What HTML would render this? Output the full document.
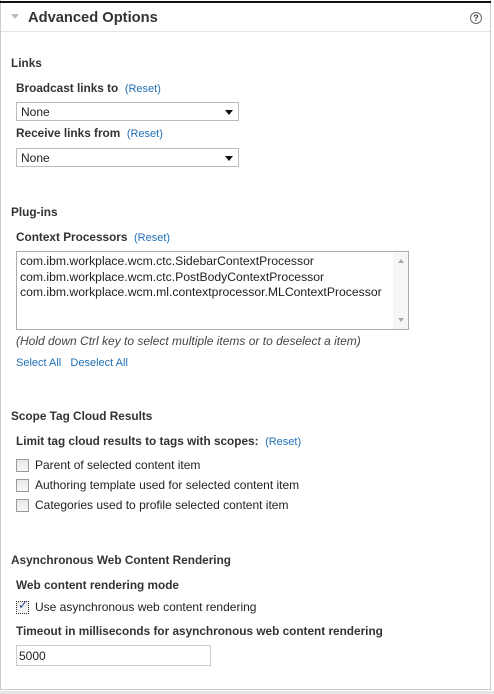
<!DOCTYPE html>
<html><head><style>
body{margin:0;width:494px;height:694px;background:#fff;font-family:"Liberation Sans",Arial,sans-serif;font-size:12px;color:#222;position:relative;overflow:hidden}
.a{position:absolute;white-space:nowrap;line-height:14px}
.b{font-weight:bold;color:#333;font-size:11.8px}
.r{color:#1f6fb5;font-weight:normal;font-size:11px}
.sel{position:absolute;left:16px;width:221px;height:17px;border:1px solid #bbb;background:#fff}
.sel span{position:absolute;left:4px;top:2px}
.sel i{position:absolute;right:5px;top:7px;border-left:4px solid transparent;border-right:4px solid transparent;border-top:5px solid #111}
.cb{position:absolute;left:16px;width:11px;height:11px;border:1px solid #999;background:linear-gradient(#e8e8e8,#f8f8f8)}
</style></head><body>
<div style="position:absolute;left:0;top:0;width:491px;height:690px;border-left:1px solid #ccc;border-right:1px solid #ccc;border-bottom:1px solid #ccc;box-sizing:border-box"></div>
<div style="position:absolute;left:0;top:691px;width:494px;height:3px;background:#e6e6e6"></div>
<div style="position:absolute;left:0;top:1px;width:491px;height:2px;background:#111"></div>
<div style="position:absolute;left:1px;top:31px;width:489px;height:1px;background:#e4e4e4"></div>
<div style="position:absolute;left:11px;top:14px;border-left:4px solid transparent;border-right:4px solid transparent;border-top:5px solid #bbb"></div>
<div class="a" style="left:28px;top:9px;font-size:14.7px;line-height:18px;color:#333;font-weight:bold">Advanced Options</div>
<div style="position:absolute;left:470px;top:12px;width:10px;height:10px;border:1px solid #666;border-radius:50%;font-size:9px;line-height:10px;text-align:center;color:#444;font-weight:bold">?</div>

<div class="a b" style="left:11px;top:56px">Links</div>
<div class="a b" style="left:16px;top:81px">Broadcast links to &nbsp;<span class="r">(Reset)</span></div>
<div class="sel" style="top:102px"><span>None</span><i></i></div>
<div class="a b" style="left:16px;top:126px">Receive links from &nbsp;<span class="r">(Reset)</span></div>
<div class="sel" style="top:148px"><span>None</span><i></i></div>

<div class="a b" style="left:11px;top:205px">Plug-ins</div>
<div class="a b" style="left:16px;top:230px">Context Processors &nbsp;<span class="r">(Reset)</span></div>
<div style="position:absolute;left:16px;top:251px;width:391px;height:77px;border:1px solid #aaa;background:#fff">
<div class="a" style="left:3px;top:2px;line-height:15.5px;font-size:12.2px">com.ibm.workplace.wcm.ctc.SidebarContextProcessor<br>com.ibm.workplace.wcm.ctc.PostBodyContextProcessor<br>com.ibm.workplace.wcm.ml.contextprocessor.MLContextProcessor</div>
<div style="position:absolute;right:0;top:0;width:15px;height:77px;background:#f6f6f6"></div>
<div style="position:absolute;right:4px;top:7px;border-left:3px solid transparent;border-right:3px solid transparent;border-bottom:4px solid #aaa"></div>
<div style="position:absolute;right:4px;bottom:7px;border-left:3px solid transparent;border-right:3px solid transparent;border-top:4px solid #aaa"></div>
</div>
<div class="a" style="left:16px;top:334px;font-style:italic;color:#444">(Hold down Ctrl key to select multiple items or to deselect a item)</div>
<div class="a r" style="left:16px;top:356px">Select All &nbsp;&nbsp;Deselect All</div>

<div class="a b" style="left:11px;top:409px">Scope Tag Cloud Results</div>
<div class="a b" style="left:16px;top:434px">Limit tag cloud results to tags with scopes: &nbsp;<span class="r">(Reset)</span></div>
<div class="cb" style="top:459px"></div><div class="a" style="left:35px;top:458px">Parent of selected content item</div>
<div class="cb" style="top:479px"></div><div class="a" style="left:35px;top:478px">Authoring template used for selected content item</div>
<div class="cb" style="top:499px"></div><div class="a" style="left:35px;top:498px">Categories used to profile selected content item</div>

<div class="a b" style="left:11px;top:553px">Asynchronous Web Content Rendering</div>
<div class="a b" style="left:16px;top:578px">Web content rendering mode</div>
<div class="cb" style="top:601px;border:1px dotted #333"></div>
<div class="a" style="left:18px;top:598px;font-size:12px;color:#2a4c9a">✓</div>
<div class="a" style="left:35px;top:600px">Use asynchronous web content rendering</div>
<div class="a b" style="left:16px;top:624px">Timeout in milliseconds for asynchronous web content rendering</div>
<div style="position:absolute;left:16px;top:645px;width:193px;height:19px;border:1px solid #ccc;background:#fff"><span class="a" style="left:2px;top:3px">5000</span></div>
</body></html>
